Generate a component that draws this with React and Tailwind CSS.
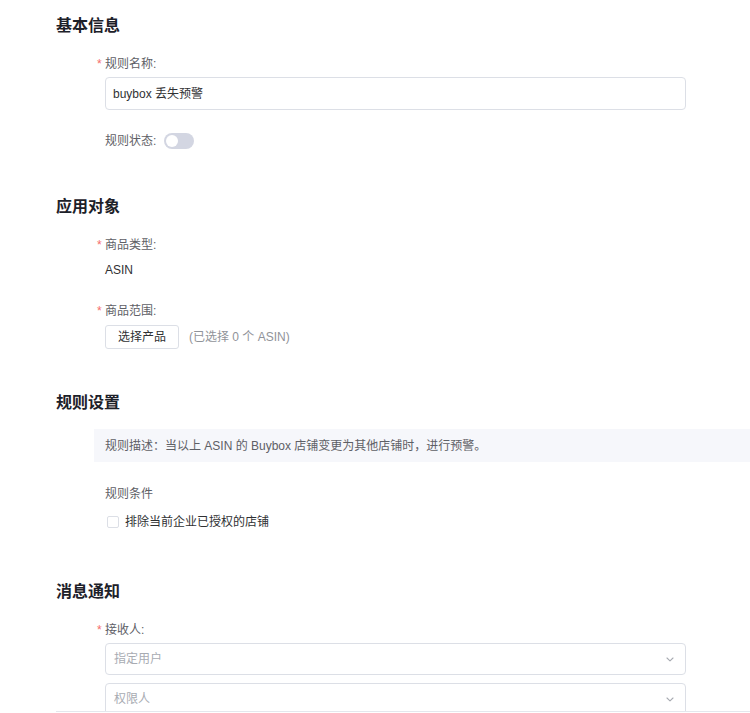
import React from "react";

const font = { fontFamily: '"Liberation Sans", "Noto Sans CJK SC", sans-serif' };

function Heading({ children, className = "" }) {
  return (
    <h2 className={`text-[16px] leading-6 font-bold text-[#1d2129] ${className}`}>{children}</h2>
  );
}

function Label({ children, required, className = "" }) {
  return (
    <div className={`relative text-[12px] leading-5 text-[#5e6066] ${className}`}>
      {required && (
        <span className="absolute -left-[8px] top-0 text-[#f56c6c]">*</span>
      )}
      {children}
    </div>
  );
}

function Chevron() {
  return (
    <svg width="8" height="5" viewBox="0 0 8 5" fill="none" className="text-[#a8abb2]">
      <path d="M1 1l3 2.8L7 1" stroke="currentColor" strokeWidth="1.1" strokeLinecap="round" strokeLinejoin="round" />
    </svg>
  );
}

function Select({ placeholder, className = "" }) {
  return (
    <div className={`w-[581px] h-[32px] flex items-center justify-between border border-[#dcdfe6] rounded-[4px] pl-[8px] pr-[11px] ${className}`}>
      <span className="text-[12px] text-[#a8abb2]">{placeholder}</span>
      <Chevron />
    </div>
  );
}

export default function App() {
  return (
    <div className="relative w-[750px] h-[713px] overflow-hidden bg-white" style={font}>
      <div className="pl-[56px] pt-[14px]">
        <Heading>基本信息</Heading>
        <div className="pl-[49px]">
          <Label required className="mt-[16px]">规则名称:</Label>
          <div className="mt-[3px] w-[581px] h-[33px] flex items-center border border-[#dcdfe6] rounded-[4px] px-[7px] text-[12px] text-[#303133]">
            buybox 丢失预警
          </div>
          <div className="mt-[21px] flex items-center h-5">
            <span className="text-[12px] text-[#5e6066]">规则状态:</span>
            <span className="ml-[8px] w-[30px] h-[16px] rounded-full bg-[#d3d6e2] flex items-center px-[2px]">
              <span className="w-[12px] h-[12px] rounded-full bg-white" />
            </span>
          </div>
        </div>

        <Heading className="mt-[44px]">应用对象</Heading>
        <div className="pl-[49px]">
          <Label required className="mt-[16px]">商品类型:</Label>
          <div className="mt-[5px] text-[12px] leading-5 text-[#303133]">ASIN</div>
          <Label required className="mt-[21px]">商品范围:</Label>
          <div className="mt-[4px] flex items-center">
            <button className="h-[24px] w-[74px] border border-[#dcdfe6] rounded-[3px] text-[12px] text-[#303133] bg-white">
              选择产品
            </button>
            <span className="ml-[10px] text-[12px] text-[#909399]">(已选择 0 个 ASIN)</span>
          </div>
        </div>

        <Heading className="mt-[42px]">规则设置</Heading>
        <div className="pl-[38px]">
          <div className="mt-[14px] h-[33px] bg-[#f6f7fb] flex items-center pl-[11px] text-[12px] text-[#5e6066]">
            规则描述：当以上 ASIN 的 Buybox 店铺变更为其他店铺时，进行预警。
          </div>
        </div>
        <div className="pl-[49px]">
          <div className="mt-[22px] text-[12px] leading-5 text-[#5e6066]">规则条件</div>
          <label className="mt-[8px] flex items-center h-5">
            <span className="ml-[2px] w-[12px] h-[12px] border border-[#dcdfe6] rounded-[2px] bg-white" />
            <span className="ml-[6px] text-[12px] text-[#303133]">排除当前企业已授权的店铺</span>
          </label>
        </div>

        <Heading className="mt-[48px]">消息通知</Heading>
        <div className="pl-[49px]">
          <Label required className="mt-[16px]">接收人:</Label>
          <Select placeholder="指定用户" className="mt-[3px]" />
          <Select placeholder="权限人" className="mt-[8px]" />
        </div>
      </div>
      <div className="absolute left-[56px] right-0 bottom-0 h-[2px] border-t border-[#e4e7ed] bg-white" />
    </div>
  );
}
